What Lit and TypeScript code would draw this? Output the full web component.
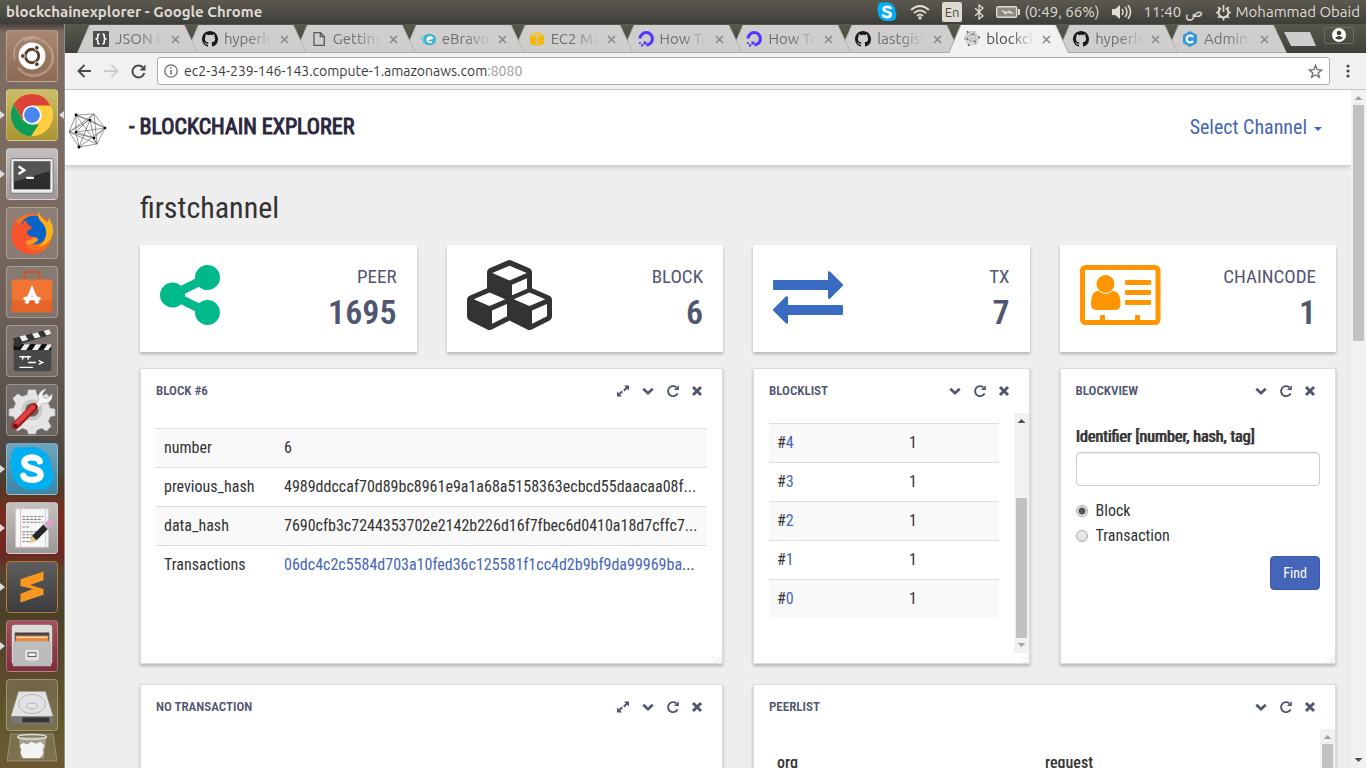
import { LitElement, html, css, svg, TemplateResult } from "lit";
import { customElement, property } from "lit/decorators.js";
import { classMap } from "lit/directives/class-map.js";

/* ---------- shared icon shapes ---------- */

const githubMark = svg`<path fill="#1b1817" d="M8 0C3.58 0 0 3.58 0 8c0 3.54 2.29 6.53 5.47 7.59.4.07.55-.17.55-.38v-1.49c-2.23.48-2.7-.95-2.7-.95-.36-.92-.89-1.17-.89-1.17-.73-.5.05-.49.05-.49.8.06 1.23.83 1.23.83.72 1.22 1.87.87 2.33.66.07-.52.28-.87.51-1.07-1.78-.2-3.64-.89-3.64-3.95 0-.87.31-1.59.82-2.15-.08-.2-.36-1.02.08-2.12 0 0 .67-.21 2.2.82A7.6 7.6 0 0 1 8 3.87c.68 0 1.36.09 2 .26 1.53-1.04 2.2-.82 2.2-.82.44 1.1.16 1.92.08 2.12.51.56.82 1.27.82 2.15 0 3.07-1.87 3.75-3.65 3.95.29.25.54.73.54 1.48v2.2c0 .21.15.46.55.38A8 8 0 0 0 16 8c0-4.42-3.58-8-8-8z"/>`;

const networkMark = svg`
  <g fill="none" stroke="#555" stroke-width=".6">
    <path d="M8 2 26 1 37 15 29 31 11 34 1 19z"/>
    <path d="M8 2 37 15 11 34M26 1 29 31 1 19zM8 2 29 31M8 2 8 19 26 25 22 7zM26 1 8 19 11 34M22 7 1 19 26 25 37 15 22 7 11 34M8 19 37 15M26 25 29 31"/>
  </g>
  <g fill="#000"><circle cx="8" cy="2" r="1.400"/><circle cx="22" cy="7" r="1.300"/><circle cx="37" cy="15" r="1.300"/><circle cx="8" cy="19" r="1.300"/><circle cx="26" cy="25" r="1.300"/><circle cx="11" cy="34" r="1.500"/></g>`;

const oceanMark = svg`<path fill="none" stroke="#5433ff" stroke-width="3" d="M2 7.5A6.2 6.2 0 1 1 8.5 14"/><path fill="#5433ff" d="M5.5 10.5h3v3h-3zM3 13.2h2.2v2.2H3zM1 11.2h1.8V13H1z"/>`;

const favicons: Record<string, TemplateResult> = {
  json: svg`<rect width="16" height="16" rx="1" fill="#4d4d4d"/><path fill="none" stroke="#fff" stroke-width="1.6" d="M6.5 3C4.500 3 4.800 4 4.800 6S3.500 8 2.500 8C3.500 8 4.800 8 4.800 10S4.500 13 6.500 13M9.500 3C11.500 3 11.200 4 11.200 6S12.500 8 13.500 8C12.500 8 11.200 8 11.200 10S11.500 13 9.500 13"/>`,
  github: githubMark,
  page: svg`<path fill="none" stroke="#5a5a5a" stroke-width="1.3" d="M3 1.700h6.500l3.800 3.800v8.800H3zM9.300 1.700v4h4"/>`,
  ebravo: svg`<rect x="3" y="3" width="13" height="11" rx="5.500" fill="#3eb3cf"/><path stroke="#7cc8da" stroke-width="1.500" d="M0 8h4M1 5.500h3M2 11h3"/><path fill="none" stroke="#fff" stroke-width="1.700" d="M7 8.800 12.300 7.300A2.700 2.700 0 1 0 11.800 10.600"/>`,
  aws: svg`<path fill="#f6c51b" d="M8 1l6.500 1.800L8 4.800 1.500 2.800z"/><path fill="#efb90d" d="M1 4l6.500 1.800V15L1 13zM8.500 5.800 15 4v9l-6.500 2z"/>`,
  ocean: oceanMark,
  network: svg`<g transform="scale(.42)">${networkMark}</g>`,
  admin: svg`<path fill="#3498db" d="M8 0l7 4v8l-7 4-7-4V4z"/><path fill="none" stroke="#fff" stroke-width="2.200" d="M11 6A3.500 3.500 0 1 0 11 10"/>`,
};

const panelIcons: Record<string, TemplateResult> = {
  Expand: svg`<path fill="currentColor" d="M8 1.500h5v5l-1.800-1.800-2.700 2.700-1.400-1.400 2.700-2.700zM6 12.500H1v-5l1.800 1.800 2.700-2.700 1.400 1.400-2.700 2.700z"/>`,
  Collapse: svg`<path fill="none" stroke="currentColor" stroke-width="2.600" d="M2.300 4.700 7 9.300l4.700-4.600"/>`,
  Refresh: svg`<path fill="none" stroke="currentColor" stroke-width="1.900" d="M11.600 9.300A5 5 0 1 1 10.300 3.300"/><path fill="currentColor" d="M12.800 1.200v4.900H7.900z"/>`,
  Close: svg`<path fill="none" stroke="currentColor" stroke-width="2.900" d="M2 3l8 8M10 3l-8 8"/>`,
};

/* ---------- launcher pictures, 52 by 52 ---------- */

const launcherItems: { name: string; tone: string; running?: boolean; focused?: boolean; art: TemplateResult }[] = [
  {
    name: "Search", tone: "brown",
    art: svg`<g fill="none" stroke="#d8c3b5" stroke-opacity=".45" stroke-width="2"><path d="M8 30C4 14 18 2 34 8M44 16C56 32 40 52 18 44M18 10c18-8 34 8 28 24M12 38C20 52 42 50 48 30"/></g>
      <circle cx="26" cy="26" r="14" fill="#fff"/><circle cx="26" cy="26" r="7" fill="none" stroke="#5b3d2b" stroke-width="3"/>
      <g fill="#5b3d2b" stroke="#fff" stroke-width="1"><circle cx="16.500" cy="26" r="2.500"/><circle cx="31" cy="17.500" r="2.500"/><circle cx="31" cy="34.500" r="2.500"/></g>`,
  },
  {
    name: "Google Chrome", tone: "gold", running: true, focused: true,
    art: svg`<circle cx="26" cy="26" r="22" fill="#ffcd40"/><path fill="#db4437" d="M6.900 15A22 22 0 0 1 45.300 16H26L16.500 31z"/><path fill="#0f9d58" d="M7 15 16.500 31.500 26 36h7L25 48A22 22 0 0 1 7 15z"/><circle cx="26" cy="26" r="10" fill="#fff"/><circle cx="26" cy="26" r="8.200" fill="#4a86f2"/>`,
  },
  {
    name: "Terminal", tone: "silver", running: true,
    art: svg`<rect x="4" y="10" width="44" height="36" rx="2" fill="#eee" stroke="#777"/><rect x="7" y="13" width="38" height="29" fill="#2d2d2d"/><path fill="#555" d="M7 13h38v10L7 34z"/><path fill="none" stroke="#fff" stroke-width="2.500" d="M12 18l6 4-6 4M20 30h8"/>`,
  },
  {
    name: "Firefox", tone: "dim",
    art: svg`<circle cx="26" cy="27" r="21" fill="#f7701d"/><circle cx="28" cy="23" r="15" fill="#0a63c9"/><path fill="#ffb11b" d="M33 3c-2 8 2 10 5 14 5 7 3 18-5 23 8 0 15-8 15-17 0-6-3-8-4-13-1 2-1 4-2 5-3-3-8-5-9-12z"/><path fill="#f9532b" d="M7 10c0 3 0 4 1 6-5 7-5 20 3 27 9 8 22 6 28-1-8 4-18 2-20-5 5 3 9-1 12-3 2-1 1-4-3-4-5 0-8-3-7-6 2-2 4-1 5-4-2-2-5-2-6-7-2 1-4 2-5 5-4 0-6-4-8-8z"/><path fill="#ff9a24" d="M20 37c6 3 9-1 12-3 1-2-1-3-4-3-2 0-3 3-8 3z"/>`,
  },
  {
    name: "Software", tone: "dim",
    art: svg`<path fill="none" stroke="#c65b31" stroke-width="2.500" d="M18 17V8q0-3 4-3h8q4 0 4 3v9"/><path fill="#f27435" d="M5 13h42v34H5z"/><path fill="#e56427" d="M5 35h42v12H5z"/><path fill="none" stroke="#fff" stroke-width="4" d="M20 38l6-14 6 14"/><rect x="17" y="31" width="18" height="3.500" rx="1.700" fill="#fff"/>`,
  },
  {
    name: "Video editor", tone: "dim",
    art: svg`<path fill="#333" d="M6 13 44 3l2 6L9 20z"/><path fill="#eee" d="M13 11l6-1.600 3 5-6 1.600zM26 8l6-1.600 3 5-6 1.600zM38 5l6-1.600 2 5-5 1.400z"/><rect x="7" y="19" width="39" height="28" rx="2" fill="#484848"/><path fill="#111" d="M7 19h39v6H7z"/><path fill="#eee" d="M18 19h6l-4 6h-6zM30 19h6l-4 6h-6zM42 19h4v2l-3 4h-5z"/><circle cx="11" cy="18" r="4" fill="#333"/><path stroke="#fff" stroke-width="1.500" fill="none" d="M13 32h12M17 31l-1 4M22 31v4M22 38h8M33 36l4 2-4 2M13 43h14"/>`,
  },
  {
    name: "System Settings", tone: "dim",
    art: svg`<path fill="#e4e4e4" stroke="#aaa" stroke-width=".6" d="M22 5h8l1 5 5 2 5-3 5 5-3 5 2 5 5 1v7l-5 1-2 5 3 5-5 5-5-3-5 2-1 4h-8l-1-4-5-2-5 3-5-5 3-5-2-5-5-1v-7l5-1 2-5-3-5 5-5 5 3 5-2z"/><circle cx="26" cy="26" r="11" fill="#c9c9c9"/><circle cx="26" cy="26" r="7" fill="#6b635c"/><path fill="#f4f4f4" stroke="#999" stroke-width=".6" d="M27 23l6-7c-2-6 2-11 8-12l-4 5 1 4 4 1 5-5c1 7-4 11-10 10l-6 7z"/><path stroke="#991818" stroke-width="8" stroke-linecap="round" d="M9 42 28 23"/><path stroke="#dc4040" stroke-width="5" stroke-linecap="round" d="M9 41 27 23"/><circle cx="9" cy="42" r="2" fill="#6d1010"/>`,
  },
  {
    name: "Skype", tone: "sky", running: true,
    art: svg`<path fill="#00aff0" d="M5 13C3 7 9 1 17 4c16-5 30 6 29 22 6 9 0 24-13 21-16 3-29-7-28-21-2-4-2-8 0-13z"/><path fill="none" stroke="#fff" stroke-width="6.500" stroke-linecap="round" d="M34 18c-1-5-16-6-16 1 0 8 17 5 17 13 0 7-16 7-18 1"/>`,
  },
  {
    name: "Text Editor", tone: "silver", running: true,
    art: svg`<rect x="9" y="6" width="34" height="40" fill="#f7f7f7" stroke="#ccc"/><path stroke="#f3b7b7" d="M14 6v40"/><path stroke="#bcd0e8" d="M40 6v40" /><g stroke="#888" stroke-width="1.200" stroke-dasharray="3 1"><path d="M16 14h22M16 17h20M16 20h22M16 25h8M16 30h22M16 33h18M16 36h18M16 40h12"/></g><path stroke="#262626" stroke-width="6.500" d="M28 37 41 24"/><path fill="#e7c27b" d="M26 34l5 5-8 3z"/><path stroke="#bbb" stroke-width="6.500" d="M40 25l2.500-2.500"/><path stroke="#e59bce" stroke-width="6.500" d="M42 23l4-4"/>`,
  },
  {
    name: "Sublime Text", tone: "slate", running: true,
    art: svg`<path fill="#f89820" d="M14 18 38 10v9L24 24l14 4v6L14 42v-9l13-5-13-3z"/>`,
  },
  {
    name: "Files", tone: "wine", running: true,
    art: svg`<path fill="#dcdcdc" d="M5 7q0-3 3-3h36q3 0 3 3v37H5z"/><path fill="#444" d="M8 12h36v10H8z"/><path fill="#ef8a3c" d="M9 15h34v8H9z"/><path stroke="#fff" d="M10 17h32"/><path fill="#bcbcbc" d="M6 21h40v26H6z"/><rect x="19" y="30" width="14" height="11" rx="2" fill="#e4e4e4"/><rect x="22" y="33" width="8" height="4" fill="#fff" stroke="#555"/>`,
  },
  {
    name: "Disk", tone: "dim",
    art: svg`<path fill="#e2e2e2" stroke="#999" stroke-width=".6" d="M12 12h28l8 26H4z"/><path fill="#777" d="M4 38h44v7H4z"/><path fill="#333" d="M16 39h28v5H16z"/><g fill="none" stroke="#b5b5b5"><ellipse cx="26" cy="25" rx="14" ry="10"/><ellipse cx="26" cy="27" rx="6" ry="3"/></g>`,
  },
];

const tabs = [
  { icon: "json", label: "JSON E" },
  { icon: "github", label: "hyperle" },
  { icon: "page", label: "Getting" },
  { icon: "ebravo", label: "eBravo" },
  { icon: "aws", label: "EC2 Ma" },
  { icon: "ocean", label: "How To" },
  { icon: "ocean", label: "How To" },
  { icon: "github", label: "lastgist" },
  { icon: "network", label: "blockch", active: true },
  { icon: "github", label: "hyperle" },
  { icon: "admin", label: "Admin" },
];

/* ---------- desktop bar ---------- */

@customElement("desktop-bar")
export class DesktopBar extends LitElement {
  static styles = css`
    :host { display: block; }
    .bar { display: flex; align-items: center; justify-content: space-between; height: 24px; padding: 0 6px; background: linear-gradient(#5b594f, #3e3d39); color: #dfdbd2; font: 15px/24px Ubuntu, "Noto Sans", sans-serif; white-space: nowrap; }
    .title { font-weight: 700; }
    .tray { display: flex; align-items: center; gap: 12px; }
    .tray span { display: flex; align-items: center; gap: 4px; }
    .tray .lang { height: 20px; padding: 0 3px; border-radius: 2px; background: #dfdbd2; color: #4a4843; font-size: 13px; line-height: 20px; }
    svg { display: block; }
  `;
  render() {
    return html`<header class="bar">
      <span class="title">blockchainexplorer - Google Chrome</span>
      <div class="tray">
        <svg width="22" height="22" viewBox="0 0 52 52"><path fill="#00aff0" d="M5 13C3 7 9 1 17 4c16-5 30 6 29 22 6 9 0 24-13 21-16 3-29-7-28-21-2-4-2-8 0-13z"/><path fill="none" stroke="#fff" stroke-width="6.500" d="M35 19c-1-6-17-7-17 0 0 8 17 5 17 13 0 8-17 8-19 0"/></svg>
        <svg width="20" height="16" viewBox="0 0 20 16" fill="none" stroke="#dfdbd2" stroke-width="1.800"><path d="M1 6q9-8 18 0M4 9q6-5 12 0M7 12q3-3 6 0"/><circle cx="10" cy="14" r=".8"/></svg>
        <span class="lang">En</span>
        <svg width="10" height="16" viewBox="0 0 10 16" fill="none" stroke="#dfdbd2" stroke-width="1.300"><path d="M1 4l8 8-4 3V1l4 3-8 8"/></svg>
        <span>
          <svg width="24" height="12" viewBox="0 0 24 12"><rect x=".7" y=".7" width="20" height="10.600" rx="1.500" fill="#8d8a82" stroke="#dfdbd2" stroke-width="1.400"/><path fill="#dfdbd2" d="M22 3h2v6h-2zM5 4l7 2 1-2 5 4-7-1-1 2z"/></svg>
          (0:49, 66%)
        </span>
        <svg width="20" height="14" viewBox="0 0 20 14"><path fill="#dfdbd2" d="M0 4h3l5-4v14l-5-4H0z"/><path fill="none" stroke="#dfdbd2" stroke-width="1.500" d="M10 4q2 3 0 6M13 2q4 5 0 10M16 0q5 7 0 14"/></svg>
        <span>ص 11:40</span>
        <span>
          <svg width="17" height="17" viewBox="0 0 17 17" fill="none" stroke="#dfdbd2"><path stroke-width="2" d="M6 4.200a5 5 0 1 0 5 0"/><path stroke-width="1.600" d="M8.500 1v7M8.500 14v2.500M1 8.500h2.500M13.500 8.500H16M3 3l2 2M14 3l-2 2M3 14l2-2M14 14l-2-2"/></svg>
          Mohammad Obaid
        </span>
      </div>
    </header>`;
  }
}

/* ---------- launcher ---------- */

@customElement("app-launcher")
export class AppLauncher extends LitElement {
  static styles = css`
    :host { display: block; width: 65px; flex: none; overflow: hidden; }
    .dock { display: flex; flex-direction: column; gap: 7px; box-sizing: border-box; height: 100%; padding: 6px 6px 0; border-right: 1px solid #8b8d98; background: linear-gradient(#4a423c 0, #7d6c62 8px, #7b6a60 200px, #5f554e 360px, #4a443e 445px, #4f3a25 460px, #7a2c20 490px, #6d2922 530px, #55452c 550px, #4a4129 590px, #5c4a2a 650px, #62592d 700px, #6b5932 744px); }
    .tile { position: relative; flex: none; width: 52px; height: 52px; box-sizing: border-box; padding: 0; border: 1px solid rgba(255,255,255,.28); border-radius: 4px; background: rgba(255,255,255,.14); }
    .tile svg { display: block; width: 50px; height: 50px; }
    .brown { background: linear-gradient(#a98772, #8e6a54); }
    .gold { background: linear-gradient(#cbbd6a, #a8942f); }
    .silver { background: linear-gradient(#c4c0c0, #9d9797); }
    .sky { background: linear-gradient(#6fa5bd, #3d84a5); }
    .slate { background: linear-gradient(#5d5d5d, #3d3d3f); border-color: #b97a33; }
    .wine { background: linear-gradient(#a0525d, #7d2c3a); }
    .run::before, .focus::after { content: ""; position: absolute; top: 21px; border: 4px solid transparent; }
    .run::before { left: -7px; border-left: 5px solid #ddd; border-right: 0; }
    .focus::after { right: -7px; border-right: 5px solid #ddd; border-left: 0; }
    .bin { height: 30px; margin-top: -6px; border-color: transparent; background: none; }
    .tile.bin svg { height: 29px; }
  `;
  render() {
    return html`<nav class="dock" aria-label="Launcher">
      ${launcherItems.map((i) => html`<button class=${classMap({ tile: true, [i.tone]: true, run: !!i.running, focus: !!i.focused })} aria-label=${i.name}><svg viewBox="0 0 52 52">${i.art}</svg></button>`)}
      <button class="tile bin" aria-label="Trash"><svg viewBox="0 0 52 30" preserveAspectRatio="none"><path fill="#fff" fill-opacity=".14" stroke="#fff" stroke-opacity=".3" d="M4 1h44l4 28H0z"/><path fill="#d8d8d8" fill-opacity=".45" d="M12 4h29l-3 22H15z"/><ellipse cx="26" cy="4" rx="15" ry="2.500" fill="none" stroke="#ddd" stroke-width="1.500"/><path fill="#f4f4f4" d="M13 13l4-3 4 2 4-3 5 2 5-2 4 4-2 4 1 4-4 5H17l-3-5 1-4z"/></svg></button>
    </nav>`;
  }
}

/* ---------- browser chrome ---------- */

@customElement("browser-chrome")
export class BrowserChrome extends LitElement {
  static styles = css`
    :host { display: block; font: 15px/20px Ubuntu, "Noto Sans", sans-serif; }
    button { padding: 0; border: 0; background: none; font: inherit; color: inherit; }
    svg { display: block; }
    .strip { display: flex; align-items: flex-start; height: 29px; padding: 1px 12px 0 12px; box-sizing: border-box; background: linear-gradient(#58594a, #3f403a); }
    .tabs { display: flex; flex: 1; min-width: 0; isolation: isolate; }
    .tab { position: relative; display: flex; flex: 1 1 0; min-width: 0; align-items: center; gap: 6px; height: 28px; padding: 0 18px 0 16px; box-sizing: border-box; color: #716f6c; }
    .tab + .tab { margin-left: -12px; }
    .tab::before, .tab::after { content: ""; position: absolute; inset: 0; z-index: -1; background: #aaa8a5; clip-path: polygon(12px 0, calc(100% - 13px) 0, 100% 100%, 0 100%); }
    .tab::after { inset: 0 1px 1px; background: #d0cecc; }
    .tab.active { color: #4c4b49; }
    .tab.active::after { inset: 0 1px 0; background: #f2f1f0; }
    .tab .icon { flex: none; width: 16px; height: 16px; }
    .label { flex: 1; min-width: 0; overflow: hidden; white-space: nowrap; -webkit-mask-image: linear-gradient(90deg, #000 50%, transparent); mask-image: linear-gradient(90deg, #000 50%, transparent); }
    .x { flex: none; margin-left: 2px; }
    .new { flex: none; width: 32px; height: 14px; margin: 7px 8px 0 -3px; background: #cfcdcb; clip-path: polygon(0 0, 26px 0, 100% 100%, 7px 100%); }
    .user { display: flex; justify-content: center; width: 30px; height: 17px; margin-top: 2px; border: 1px solid #6d6d64; border-radius: 2px; box-sizing: border-box; }
    .tools { display: flex; align-items: center; height: 37px; padding: 0 12px; border-bottom: 1px solid #c8c6c4; box-sizing: border-box; background: #f2f1f0; gap: 11px; }
    .box { display: flex; align-items: center; flex: 1; gap: 6px; height: 28px; padding: 0 6px; box-sizing: border-box; border: 1px solid #aeacaa; border-radius: 3px; background: #fff; }
    .url { display: flex; flex: 1; color: #3b3b3b; font-size: 14px; }
    .port { color: #999; }
  `;
  render() {
    return html`
      <div class="strip">
        <div class="tabs">
          ${tabs.map((t, i) => html`<div class=${classMap({ tab: true, active: !!t.active })} style="z-index:${t.active ? 20 : 12 - i}">
            <svg class="icon" viewBox="0 0 16 16">${favicons[t.icon]}</svg>
            <span class="label">${t.label}</span>
            <button class="x" aria-label="Close tab"><svg width="9" height="9" viewBox="0 0 9 9"><path stroke="#8a8886" stroke-width="1.500" d="M1 1l7 7M8 1 1 8"/></svg></button>
          </div>`)}
        </div>
        <button class="new" aria-label="New tab"></button>
        <button class="user" aria-label="Profile"><svg width="14" height="14" viewBox="0 0 14 14"><circle cx="7" cy="7" r="7" fill="#fff"/><circle cx="7" cy="5" r="2.300" fill="#3f403a"/><path fill="#3f403a" d="M3 10q4-4 8 0-4 3-8 0z"/></svg></button>
      </div>
      <div class="tools">
        <button aria-label="Back"><svg width="14" height="14" viewBox="0 0 14 14" fill="none" stroke="#4b4b4b" stroke-width="1.900"><path d="M14 7H1.500M7.500 1l-6 6 6 6"/></svg></button>
        <button aria-label="Forward"><svg width="18" height="14" viewBox="0 0 18 14" fill="none" stroke="#cfcdcb" stroke-width="1.900"><path d="M2 7h13M9.500 1l6 6-6 6"/></svg></button>
        <button aria-label="Reload"><svg width="15" height="15" viewBox="0 0 15 15"><path fill="none" stroke="#4b4b4b" stroke-width="2" d="M13.300 9A6 6 0 1 1 11.800 3.300"/><path fill="#4b4b4b" d="M14.500.5v6h-6z"/></svg></button>
        <div class="box">
          <svg width="14" height="14" viewBox="0 0 14 14" fill="none" stroke="#6b6b6b" stroke-width="1.300"><circle cx="7" cy="7" r="6.200"/><path stroke-width="1.500" d="M7 6v4.500M7 3.300v1.500"/></svg>
          <span class="url">ec2-34-239-146-143.compute-1.amazonaws.com<span class="port">:8080</span></span>
          <button aria-label="Bookmark"><svg width="15" height="15" viewBox="0 0 15 15"><path fill="none" stroke="#6b6b6b" stroke-width="1.300" d="M7.500 1.500l1.700 4.200 4.500.3-3.500 2.900 1.200 4.400-3.900-2.500-3.900 2.500 1.200-4.400L1.300 6l4.500-.3z"/></svg></button>
        </div>
        <button aria-label="Menu"><svg width="13" height="14" viewBox="0 0 13 14" fill="#4b4b4b"><circle cx="7" cy="2" r="1.600"/><circle cx="7" cy="7" r="1.600"/><circle cx="7" cy="12" r="1.600"/></svg></button>
      </div>`;
  }
}

/* ---------- scrollbar ---------- */

@customElement("scroll-track")
export class ScrollTrack extends LitElement {
  @property({ type: Number }) before = 0;
  @property({ type: Number }) thumb = 100;
  @property({ type: Number }) after = 0;
  static styles = css`
    :host { display: flex; flex-direction: column; flex: none; width: 15px; background: #f1f1f1; }
    svg { display: block; flex: none; width: 15px; height: 15px; }
    .lane { display: flex; flex: 1; flex-direction: column; min-height: 0; padding: 0 2px; }
    .thumb { background: #c1c1c1; }
  `;
  render() {
    return html`<svg viewBox="0 0 15 15"><path fill=${this.before ? "#505050" : "#a3a3a3"} d="M3.500 10l4-4 4 4z"/></svg>
      <div class="lane"><div style="flex:${this.before}"></div><div class="thumb" style="flex:${this.thumb}"></div><div style="flex:${this.after}"></div></div>
      <svg viewBox="0 0 15 15"><path fill=${this.after ? "#505050" : "#a3a3a3"} d="M3.500 5l4 4 4-4z"/></svg>`;
  }
}

/* ---------- dashboard panels ---------- */

@customElement("info-panel")
export class InfoPanel extends LitElement {
  @property() heading = "";
  @property({ type: Boolean }) expandable = false;
  static styles = css`
    :host { display: flex; flex-direction: column; position: relative; box-sizing: border-box; min-width: 0; border: 1px solid #dcdcdc; background: #fff; box-shadow: 0 2px 3px rgba(0,0,0,.25); }
    header { display: flex; align-items: center; justify-content: space-between; height: 44px; padding: 0 15px; flex: none; color: #515670; }
    h2 { margin: 0; font-size: 13px; line-height: 20px; font-weight: 600; }
    .tools { display: flex; gap: 11px; padding-right: 2px; }
    button { padding: 0; border: 0; background: none; color: inherit; }
    svg { display: block; width: 14px; height: 14px; }
    .body { display: flex; flex: 1; min-height: 0; }
    ::slotted(*) { flex: 1; min-width: 0; }
    .grip { position: absolute; right: 0; bottom: 0; width: 8px; height: 8px; }
  `;
  render() {
    const names = this.expandable ? ["Expand", "Collapse", "Refresh", "Close"] : ["Collapse", "Refresh", "Close"];
    return html`<header><h2>${this.heading}</h2><div class="tools">${names.map((n) => html`<button aria-label=${n}><svg viewBox="0 0 14 14">${panelIcons[n]}</svg></button>`)}</div></header>
      <div class="body"><slot></slot></div>
      <svg class="grip" viewBox="0 0 8 8"><path stroke="#bbb" stroke-width=".7" stroke-dasharray="1 1" d="M0 8l8-8M3 8l5-5M6 8l2-2"/></svg>`;
  }
}

/* ---------- page ---------- */

@customElement("app-root")
export class AppRoot extends LitElement {
  static styles = css`
    :host { display: flex; flex-direction: column; height: 100vh; overflow: hidden; }
    .desk { display: flex; flex: 1; min-height: 0; }
    .window { display: flex; flex: 1; flex-direction: column; min-width: 0; }
    .view { display: flex; flex: 1; min-height: 0; background: #eee; }
    .page { display: flex; flex: 1; flex-direction: column; min-width: 0; overflow: hidden; color: #333; font: 16px/22px "Roboto Condensed", "Liberation Sans Narrow", Roboto, sans-serif; }
    a { color: #4565b8; text-decoration: none; }
    .top { display: flex; flex: none; align-items: center; justify-content: space-between; height: 75px; padding: 0 29px 1px 3px; box-sizing: border-box; background: #fff; box-shadow: 0 2px 5px rgba(0,0,0,.18); }
    .brand { display: flex; align-items: center; gap: 21px; }
    .brand svg { width: 40px; height: 38px; margin-top: 10px; }
    .brand h1 { margin: 0; color: #2a263d; font-size: 22px; font-weight: 400; -webkit-text-stroke: 1px; }
    .channel { display: flex; align-items: center; gap: 7px; padding: 0; border: 0; background: none; color: #4565b8; font: inherit; font-size: 20px; }
    .caret { border: 4px solid transparent; border-top-color: #4565b8; border-bottom: 0; margin-top: 4px; }
    .content { padding: 24px 15px 0 75px; }
    .name { margin: 0 0 19px; font-size: 30px; line-height: 37px; font-weight: 400; }
    .grid { display: grid; grid-template-columns: repeat(4, minmax(0, 1fr)); column-gap: 30px; }
    .stat { display: flex; justify-content: space-between; height: 107px; padding: 15px 20px 0 20px; box-sizing: border-box; margin-bottom: 16px; background: #fff; box-shadow: 0 2px 3px rgba(0,0,0,.25); color: #515670; text-align: right; }
    .stat svg { display: block; height: 70px; }
    .stat dl { margin: 5px 0 0; }
    .stat dt { font-size: 19px; line-height: 24px; }
    .stat dd { margin: 0; font-size: 34px; line-height: 47px; font-weight: 600; }
    .wide { grid-column: span 2; }
    .tall { height: 296px; margin-bottom: 20px; }
    .pad { padding: 15px 15px 0; }
    table { width: 100%; border-collapse: collapse; table-layout: fixed; }
    td { height: 38px; padding: 0 8px; border-top: 1px solid #ddd; white-space: nowrap; overflow: hidden; }
    .odd { background: #f9f9f9; }
    .key { width: 104px; }
    .half { width: 116px; }
    .list { display: flex; }
    .rows { flex: 1; padding: 10px 15px 0; }
    .list scroll-track { margin-bottom: 10px; }
    th { padding: 13px 8px; text-align: left; font-weight: 500; }
    .form { display: flex; flex-direction: column; padding: 13px 15px 0; }
    .form .cap { font-weight: 400; line-height: 22px; text-shadow: 1px 0 #333; }
    .text { height: 34px; margin: 4px 0 12px; padding: 6px 12px; border: 1px solid #ccc; border-radius: 4px; box-sizing: border-box; background: #fff; box-shadow: inset 0 1px 1px rgba(0,0,0,.075); font: inherit; }
    .choice { display: flex; align-items: center; gap: 8px; height: 25px; }
    .choice input { appearance: none; width: 12px; height: 12px; margin: 0; border: 1px solid #aaa; border-radius: 50%; background: linear-gradient(#eee, #ddd); }
    .choice input:checked { background: radial-gradient(circle, #555 0 3px, #e8e8e8 4px); }
    .find { align-self: flex-end; height: 34px; margin-top: 8px; padding: 0 12px; border: 1px solid #3d5aa8; border-radius: 4px; background: #4565b8; color: #fff; font: inherit; font-size: 14px; }
  `;

  private stats = [
    { label: "PEER", value: "1695", icon: html`<svg viewBox="0 0 1792 1792"><path fill="#00b98b" d="M1216 1024q133 0 226.500 93.500t93.500 226.500-93.500 226.500-226.500 93.500-226.500-93.500-93.500-226.500q0-12 2-34l-360-180q-92 86-218 86-133 0-226.500-93.500t-93.500-226.500 93.500-226.500 226.500-93.500q126 0 218 86l360-180q-2-22-2-34 0-133 93.500-226.500t226.500-93.500 226.500 93.500 93.500 226.500-93.500 226.500-226.500 93.500q-126 0-218-86l-360 180q2 22 2 34t-2 34l360 180q92-86 218-86z"/></svg>` },
    { label: "BLOCK", value: "6", icon: html`<svg viewBox="0 0 2304 1792"><path fill="#333" d="M640 1632l384-192v-314l-384 164v342zM576 1178l404-173-404-173-404 173zM1664 1632l384-192v-314l-384 164v342zM1600 1178l404-173-404-173-404 173zM1152 901l384-165v-266l-384 164v267zM1088 522l441-189-441-189-441 189zM2176 1024v416q0 36-19 67t-52 47l-448 224q-25 14-57 14t-57-14l-448-224q-4-2-7-4-2 2-7 4l-448 224q-25 14-57 14t-57-14l-448-224q-33-16-52-47t-19-67v-416q0-38 21.500-70t56.500-48l434-186v-400q0-38 21.500-70t56.500-48l448-192q23-10 50-10t50 10l448 192q35 16 56.500 48t21.500 70v400l434 186q36 16 57 48t21 70z"/></svg>` },
    { label: "TX", value: "7", icon: html`<svg viewBox="0 0 1792 1792"><path fill="#396bc0" d="M1792 1184v192q0 13-9.500 22.500t-22.500 9.500h-1376v192q0 13-9.500 22.500t-22.500 9.500q-12 0-24-10l-319-320q-9-9-9-22 0-14 9-23l320-320q9-9 23-9 13 0 22.500 9.500t9.500 22.500v192h1376q13 0 22.500 9.500t9.500 22.500zM1792 640q0 14-9 23l-320 320q-9 9-23 9-13 0-22.500-9.500t-9.500-22.500v-192h-1376q-13 0-22.500-9.500t-9.500-22.500v-192q0-13 9.500-22.500t22.500-9.500h1376v-192q0-14 9-23t23-9q12 0 24 10l319 319q9 10 9 23z"/></svg>` },
    { label: "CHAINCODE", value: "1", icon: html`<svg viewBox="0 0 81 70"><rect x="2.500" y="7.500" width="75.500" height="55" rx="3" fill="none" stroke="#ff9500" stroke-width="5"/><g fill="#ff9500"><ellipse cx="25.500" cy="24" rx="9" ry="9"/><path d="M18.500 31q7 6 14 0 8 0 8 13 0 6-6 6H17q-6 0-6-6 0-13 7.500-13z"/><rect x="45" y="20" width="26" height="5" rx="1"/><rect x="45" y="30" width="26" height="5" rx="1"/><rect x="45" y="40" width="26" height="5" rx="1"/><path d="M20 62v-6q0-1 1-1h3q1 0 1 1v6zM55 62v-6q0-1 1-1h3q1 0 1 1v6z"/></g></svg>` },
  ];

  render() {
    return html`
      <desktop-bar></desktop-bar>
      <div class="desk">
        <app-launcher></app-launcher>
        <div class="window">
          <browser-chrome></browser-chrome>
          <div class="view">
            <main class="page">
              <header class="top">
                <div class="brand"><svg viewBox="0 0 40 38">${networkMark}</svg><h1>- BLOCKCHAIN EXPLORER</h1></div>
                <button class="channel">Select Channel <span class="caret"></span></button>
              </header>
              <div class="content">
                <h2 class="name">firstchannel</h2>
                <div class="grid">
                  ${this.stats.map((s) => html`<section class="stat">${s.icon}<dl><dt>${s.label}</dt><dd>${s.value}</dd></dl></section>`)}
                  <info-panel class="wide tall" heading="BLOCK #6" expandable>
                    <div class="pad">
                      <table>
                        <tr class="odd"><td class="key">number</td><td>6</td></tr>
                        <tr><td>previous_hash</td><td>4989ddccaf70d89bc8961e9a1a68a5158363ecbcd55daacaa08f...</td></tr>
                        <tr class="odd"><td>data_hash</td><td>7690cfb3c7244353702e2142b226d16f7fbec6d0410a18d7cffc7...</td></tr>
                        <tr><td>Transactions</td><td><a href="#tx">06dc4c2c5584d703a10fed36c125581f1cc4d2b9bf9da99969ba</a>...</td></tr>
                      </table>
                    </div>
                  </info-panel>
                  <info-panel class="tall" heading="BLOCKLIST">
                    <div class="list">
                      <div class="rows"><table>
                        ${[4, 3, 2, 1, 0].map((n) => html`<tr class=${n % 2 ? "" : "odd"}><td class="half">#<a href="#block">${n}</a></td><td>1</td></tr>`)}
                      </table></div>
                      <scroll-track .before=${70} .thumb=${140} .after=${0}></scroll-track>
                    </div>
                  </info-panel>
                  <info-panel class="tall" heading="BLOCKVIEW">
                    <form class="form">
                      <label class="cap" for="ident">Identifier [number, hash, tag]</label>
                      <input class="text" id="ident" type="text">
                      <label class="choice"><input type="radio" name="kind" checked>Block</label>
                      <label class="choice"><input type="radio" name="kind">Transaction</label>
                      <button class="find" type="button">Find</button>
                    </form>
                  </info-panel>
                  <info-panel class="wide tall" heading="NO TRANSACTION" expandable></info-panel>
                  <info-panel class="wide tall" heading="PEERLIST">
                    <div class="list">
                      <div class="rows"><table><tr><th>org</th><th>request</th></tr></table></div>
                      <scroll-track .before=${0} .thumb=${120} .after=${90}></scroll-track>
                    </div>
                  </info-panel>
                </div>
              </div>
            </main>
            <scroll-track .before=${0} .thumb=${236} .after=${412}></scroll-track>
          </div>
        </div>
      </div>`;
  }
}
